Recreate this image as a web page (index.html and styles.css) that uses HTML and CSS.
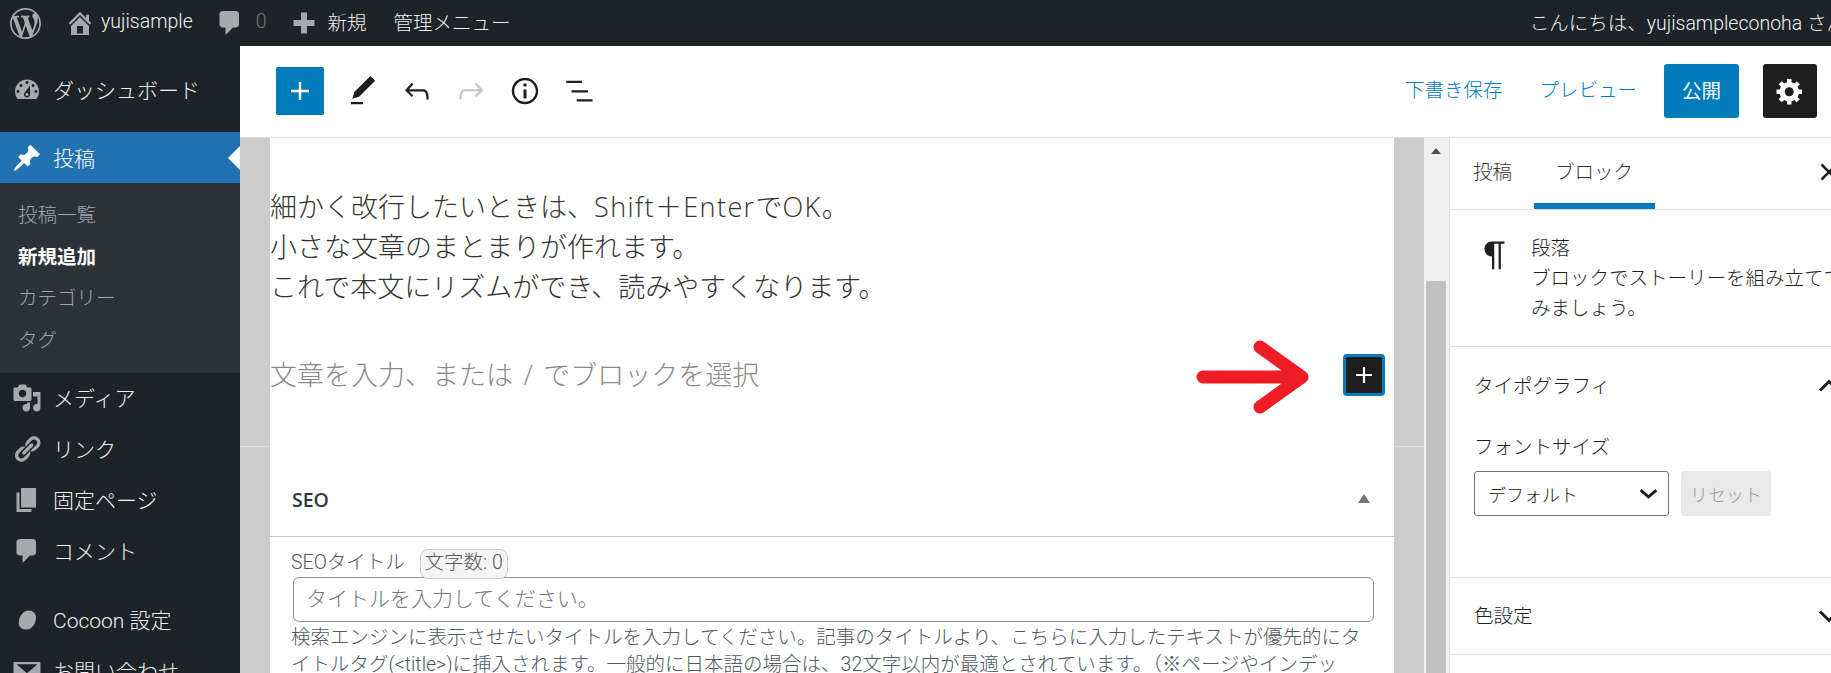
FILE: index.html
```html
<!DOCTYPE html>
<html lang="ja">
  <head>
    <meta charset="UTF-8" />
    <title>新規投稿を追加</title>
    <link rel="stylesheet" href="styles.css">
  </head>
  <body>
    <!-- 管理バー -->
    <header class="adminbar">
      <svg class="bar-icon bar-wp" viewBox="0 0 20 20"><path d="M20 10c0-5.51-4.49-10-10-10C4.48 0 0 4.49 0 10c0 5.52 4.48 10 10 10 5.51 0 10-4.48 10-10zM7.78 15.37L4.37 6.22c.55-.02 1.17-.08 1.17-.08.5-.06.44-1.13-.06-1.11 0 0-1.45.11-2.37.11-.18 0-.37 0-.58-.01C4.12 2.69 6.87 1.11 10 1.11c2.33 0 4.45.87 6.05 2.34-.68-.11-1.65.39-1.65 1.58 0 .74.45 1.36.9 2.1.35.61.55 1.36.55 2.46 0 1.49-1.4 5-1.4 5l-3.03-8.37c.54-.02.82-.17.82-.17.5-.05.44-1.25-.06-1.22 0 0-1.44.12-2.38.12-.87 0-2.33-.12-2.33-.12-.5-.03-.56 1.2-.06 1.22l.92.08 1.26 3.41zM17.41 10c.24-.64.74-1.87.43-4.25.7 1.29 1.05 2.71 1.05 4.25 0 3.29-1.73 6.24-4.4 7.78.97-2.59 1.94-5.2 2.92-7.78zM6.1 18.09C3.12 16.65 1.11 13.53 1.11 10c0-1.3.23-2.48.72-3.59C3.25 10.3 4.67 14.2 6.1 18.09zm4.03-6.63l2.58 6.98c-.86.29-1.76.45-2.71.45-.79 0-1.57-.11-2.29-.33.81-2.38 1.62-4.74 2.42-7.1z"/></svg>
      <svg class="bar-icon bar-home" viewBox="0 0 20 20"><path d="M16 8.5l1.53 1.53-1.06 1.06L10 4.62l-6.47 6.47-1.06-1.06L10 2.5l4 4v-2h2v4zm-6-2.46l6 5.99V18H4v-5.97zM12 17v-5H8v5h4z"/></svg>
      <span class="bar-site">yujisample</span>
      <svg class="bar-icon bar-comment" viewBox="0 0 20 20"><path d="M5 2h9c1.1 0 2 .9 2 2v7c0 1.1-.9 2-2 2h-2l-5 5v-5H5c-1.1 0-2-.9-2-2V4c0-1.1.9-2 2-2z"/></svg>
      <span class="bar-count">0</span>
      <svg class="bar-icon bar-plus" viewBox="0 0 20 20"><path d="M8 3h4v5h5v4h-5v5H8v-5H3V8h5z"/></svg>
      <span class="bar-new">新規</span>
      <span class="bar-manage">管理メニュー</span>
      <span class="bar-howdy">こんにちは、yujisampleconoha さん</span>
    </header>

    <div class="main">
      <!-- 左メニュー -->
      <nav class="sidemenu">
        <a class="menu-item menu-first">
          <svg viewBox="0 0 20 20"><path d="M3.76 16h12.48c1.1-1.37 1.76-3.11 1.76-5 0-4.42-3.58-8-8-8s-8 3.58-8 8c0 1.89.66 3.63 1.76 5zM10 4c.55 0 1 .45 1 1s-.45 1-1 1-1-.45-1-1 .45-1 1-1zM6 6c.55 0 1 .45 1 1s-.45 1-1 1-1-.45-1-1 .45-1 1-1zm8 0c.55 0 1 .45 1 1s-.45 1-1 1-1-.45-1-1 .45-1 1-1zm-5.37 5.55L12 7v6c0 1.1-.9 2-2 2s-2-.9-2-2c0-.57.24-1.08.63-1.45zM4 10c.55 0 1 .45 1 1s-.45 1-1 1-1-.45-1-1 .45-1 1-1zm12 0c.55 0 1 .45 1 1s-.45 1-1 1-1-.45-1-1 .45-1 1-1zm-5 3c0-.55-.45-1-1-1s-1 .45-1 1 .45 1 1 1 1-.45 1-1z"/></svg>
          ダッシュボード
        </a>
        <a class="menu-item menu-active">
          <svg viewBox="0 0 20 20"><path d="M10.44 3.02l1.82-1.82 6.36 6.35-1.83 1.82c-1.05-.68-2.48-.57-3.41.36l-.75.75c-.92.93-1.04 2.35-.35 3.41l-1.83 1.82-2.41-2.41-2.8 2.79c-.42.42-3.38 2.71-3.8 2.29s1.86-3.39 2.28-3.81l2.79-2.79L4.1 9.36l1.83-1.82c1.05.69 2.48.57 3.4-.36l.75-.75c.93-.92 1.05-2.35.36-3.41z"/></svg>
          投稿
        </a>
        <ul class="submenu">
          <li>投稿一覧</li>
          <li class="current">新規追加</li>
          <li>カテゴリー</li>
          <li>タグ</li>
        </ul>
        <a class="menu-item">
          <svg viewBox="0 0 20 20"><path d="M13 11V4c0-.55-.45-1-1-1h-1.67L9 1H5L3.67 3H2c-.55 0-1 .45-1 1v7c0 .55.45 1 1 1h10c.55 0 1-.45 1-1zM7 4.5c1.38 0 2.5 1.12 2.5 2.5S8.38 9.5 7 9.5 4.5 8.38 4.5 7 5.62 4.5 7 4.5zM14 6h5v10.5c0 1.38-1.12 2.5-2.5 2.5S14 17.88 14 16.5s1.12-2.5 2.5-2.5c.17 0 .34.02.5.05V9h-3V6zm-4 8.05V13h2v3.5c0 1.38-1.12 2.5-2.5 2.5S7 17.88 7 16.5 8.12 14 9.5 14c.17 0 .34.02.5.05z"/></svg>
          メディア
        </a>
        <a class="menu-item">
          <svg viewBox="0 0 20 20"><path d="M17.74 2.76c1.68 1.69 1.68 4.41 0 6.1l-1.53 1.52c-1.12 1.12-2.7 1.47-4.14 1.09l2.62-2.61.76-.77.76-.76c.84-.84.84-2.2 0-3.04-.84-.85-2.2-.85-3.04 0l-.77.76-3.38 3.38c-.37-1.44-.02-3 1.1-4.14l1.52-1.53c1.69-1.68 4.42-1.68 6.1 0zM8.59 13.43l5.34-5.34c.42-.42.42-1.1 0-1.52-.44-.43-1.13-.39-1.53 0l-5.33 5.34c-.42.42-.42 1.1 0 1.52.44.43 1.13.39 1.52 0zm-.76 2.29l4.14-4.15c.38 1.44.03 3.02-1.09 4.14l-1.52 1.53c-1.69 1.68-4.41 1.68-6.1 0-1.68-1.68-1.68-4.42 0-6.1l1.53-1.52c1.12-1.12 2.7-1.47 4.14-1.1l-4.14 4.15c-.85.84-.85 2.2 0 3.05.84.84 2.2.84 3.04 0z"/></svg>
          リンク
        </a>
        <a class="menu-item">
          <svg viewBox="0 0 20 20"><path d="M6 15V2h10v13H6zm-1 1h8v2H3V5h2v11z"/></svg>
          固定ページ
        </a>
        <a class="menu-item">
          <svg viewBox="0 0 20 20"><path d="M5 2h9c1.1 0 2 .9 2 2v7c0 1.1-.9 2-2 2h-2l-5 5v-5H5c-1.1 0-2-.9-2-2V4c0-1.1.9-2 2-2z"/></svg>
          コメント
        </a>
        <a class="menu-item menu-sep">
          <svg viewBox="0 0 20 20"><path d="M11 3.6c3 0 5 1.9 5 4.8 0 4-2.7 8-6.3 8C7 16.400 4.500 15 4.500 12 4.500 7.500 7.500 3.600 11 3.600z"/></svg>
          Cocoon 設定
        </a>
        <a class="menu-item">
          <svg viewBox="0 0 20 20"><path d="M1.500 4h17c.3 0 .5.2.5.5v11c0 .3-.2.5-.5.5h-17c-.3 0-.5-.2-.5-.5v-11c0-.3.2-.5.5-.5zM3 5.500l7 6 7-6z"/></svg>
          お問い合わせ
        </a>
      </nav>

      <div class="editor">
        <!-- ツールバー -->
        <div class="toolbar">
          <button class="add-btn">
            <svg viewBox="0 0 24 24"><path d="M18 11.200h-5.200V6h-1.600v5.200H6v1.600h5.200V18h1.600v-5.200H18z"/></svg>
          </button>
          <svg class="tool-icon" viewBox="0 0 24 24"><path d="M20.100 5.100L16.900 2 6.200 12.700l-1.300 4.400 4.500-1.300L20.100 5.100zM4 20.800h8v-1.500H4v1.500z"/></svg>
          <svg class="tool-icon" viewBox="0 0 24 24"><path d="M18.300 11.700c-.6-.6-1.400-.9-2.300-.9H6.700l2.900-3.300-1.100-1-4.500 5L8.500 16l1-1-2.700-2.700H16c.5 0 .9.2 1.300.5 1 1 1 3.400 1 4.500v.3h1.500v-.2c0-1.500 0-4.300-1.500-5.700z"/></svg>
          <svg class="tool-icon tool-off" viewBox="0 0 24 24"><path d="M15.600 6.500l-1.100 1 2.900 3.300H8c-.9 0-1.700.3-2.300.9-1.400 1.500-1.400 4.200-1.400 5.600v.2h1.500v-.3c0-1.100 0-3.500 1-4.500.3-.3.7-.5 1.300-.5h9.200L14.500 15l1.100 1.100 4.600-4.600-4.600-5z"/></svg>
          <svg class="tool-icon" viewBox="0 0 24 24"><path d="M12 3.200c-4.800 0-8.800 3.900-8.800 8.800 0 4.800 3.900 8.800 8.800 8.800 4.800 0 8.800-3.900 8.800-8.800 0-4.800-4-8.800-8.800-8.800zm0 16c-4 0-7.200-3.300-7.200-7.200C4.800 8 8 4.800 12 4.800s7.200 3.300 7.200 7.200c0 4-3.200 7.200-7.200 7.200zM11 17h2v-6h-2v6zm0-8h2V7h-2v2z"/></svg>
          <svg class="tool-icon" viewBox="0 0 24 24"><path d="M3.500 5.200H14v1.500H3.500zM7 11.500h11V13H7zM10.500 17.500H21V19H10.500z"/></svg>
          <div class="toolbar-right">
            <a class="tool-link">下書き保存</a>
            <a class="tool-link tool-link-last">プレビュー</a>
            <button class="publish-btn">公開</button>
            <button class="settings-btn">
              <svg viewBox="0 0 20 20"><path d="M18 12h-2.180c-.17.7-.44 1.350-.81 1.930l1.540 1.540-2.100 2.100-1.540-1.540c-.58.36-1.230.63-1.910.79V19H8v-2.180c-.68-.16-1.330-.43-1.910-.79l-1.540 1.540-2.120-2.120 1.540-1.540c-.36-.58-.63-1.230-.79-1.910H1V9.030h2.170c.16-.7.44-1.350.8-1.940L2.430 5.550l2.100-2.100 1.540 1.540c.58-.37 1.240-.64 1.930-.81V2h3v2.180c.68.16 1.330.43 1.910.79l1.540-1.540 2.120 2.120-1.540 1.540c.36.59.64 1.240.8 1.940H18V12zm-8.500 1.500c1.660 0 3-1.340 3-3s-1.340-3-3-3-3 1.340-3 3 1.340 3 3 3z"/></svg>
            </button>
          </div>
        </div>

        <div class="workspace">
          <!-- 本文エリア -->
          <div class="canvas">
            <div class="gutter"></div>
            <div class="content">
              <div class="blocks">
                <p class="para">細かく改行したいときは、<span class="latin">Shift＋Enter</span>で<span class="latin">OK</span>。<br>小さな文章のまとまりが作れます。<br>これで本文にリズムができ、読みやすくなります。</p>
                <div class="new-block">
                  <span class="placeholder">文章を入力、または / でブロックを選択</span>
                  <svg class="red-arrow" viewBox="0 0 130 76"><path d="M19 38H112M76 8L118 38L76 68" fill="none" stroke="#ee1c25" stroke-width="13" stroke-linecap="round" stroke-linejoin="round"/></svg>
                  <button class="inline-add">
                    <svg viewBox="0 0 24 24"><path d="M18 11.200h-5.200V6h-1.600v5.200H6v1.600h5.200V18h1.600v-5.200H18z"/></svg>
                  </button>
                </div>
              </div>
              <div class="seo-head">
                <span>SEO</span>
                <i class="seo-toggle"></i>
              </div>
              <div class="seo-body">
                <div class="seo-label">SEOタイトル <span class="count-badge">文字数: 0</span></div>
                <div class="seo-input">タイトルを入力してください。</div>
                <p class="seo-note">検索エンジンに表示させたいタイトルを入力してください。記事のタイトルより、こちらに入力したテキストが優先的にタ<br>イトルタグ(&lt;title&gt;)に挿入されます。一般的に日本語の場合は、32文字以内が最適とされています。（※ページやインデッ</p>
              </div>
            </div>
            <div class="gutter"></div>
            <div class="scrollbar">
              <i class="scroll-up"></i>
              <div class="scroll-thumb"></div>
            </div>
          </div>

          <!-- 右サイドバー -->
          <aside class="panel">
            <div class="tabs">
              <span class="tab">投稿</span>
              <span class="tab tab-on">ブロック</span>
              <svg class="tab-close" viewBox="0 0 24 24"><path d="M6 6l12 12M18 6L6 18" fill="none" stroke="#1e1e1e" stroke-width="2"/></svg>
            </div>
            <div class="block-card">
              <svg class="para-icon" viewBox="0 0 24 24"><path d="M18.300 3H9.900C7 3 5 5.200 5 8s2 5 4.900 5H10v8.500h1.500V4.500h2.900v17h1.500v-17h2.400z"/></svg>
              <div>
                <div class="card-title">段落</div>
                <div class="card-text">ブロックでストーリーを組み立ててみましょう。</div>
              </div>
            </div>
            <div class="section section-type">
              <div class="section-head">
                <span>タイポグラフィ</span>
                <svg class="chev" viewBox="0 0 24 24"><path d="M6 15l6-6 6 6" fill="none" stroke="#1e1e1e" stroke-width="2"/></svg>
              </div>
              <div class="font-label">フォントサイズ</div>
              <div class="font-row">
                <div class="font-select">
                  デフォルト
                  <svg viewBox="0 0 24 24"><path d="M5 9l7 6 7-6" fill="none" stroke="#1e1e1e" stroke-width="2.500"/></svg>
                </div>
                <button class="reset-btn">リセット</button>
              </div>
            </div>
            <div class="section">
              <div class="section-head section-color">
                <span>色設定</span>
                <svg class="chev" viewBox="0 0 24 24"><path d="M6 9l6 6 6-6" fill="none" stroke="#1e1e1e" stroke-width="2"/></svg>
              </div>
            </div>
          </aside>
        </div>
      </div>
    </div>
  </body>
</html>
```

FILE: styles.css
```css
/* 基本 */
* {
  margin: 0;
  padding: 0;
  box-sizing: border-box;
}

html,
body {
  width: 1831px;
  height: 673px;
  overflow: hidden;
}

body {
  display: flex;
  flex-direction: column;
  background-color: #fff;
  color: #1e1e1e;
  font-family: Roboto, "Noto Sans CJK JP", sans-serif;
}

button {
  border: none;
  font-family: inherit;
}

svg {
  display: block;
  fill: currentColor;
  flex-shrink: 0;
}

/* 管理バー */
.adminbar {
  display: flex;
  align-items: center;
  flex-shrink: 0;
  height: 46px;
  padding-left: 10px;
  background-color: #1d2327;
  color: #f0f0f1;
  font-size: 19.5px;
  font-weight: 300;
  white-space: nowrap;
}

.adminbar span {
  margin-bottom: 3px;
}

.bar-icon {
  color: #a7aaad;
}

.bar-wp {
  width: 31px;
  height: 31px;
}

.bar-home {
  width: 30px;
  height: 30px;
  margin-left: 24px;
}

.bar-site {
  margin-left: 6px;
}

.bar-comment {
  width: 30px;
  height: 30px;
  margin-left: 22px;
}

.bar-count {
  margin-left: 11px;
  color: #72777c;
}

.bar-plus {
  width: 30px;
  height: 30px;
  margin-left: 22px;
}

.bar-new {
  margin-left: 9px;
}

.bar-manage {
  margin-left: 27px;
}

.bar-howdy {
  flex-shrink: 0;
  margin-left: auto;
  margin-right: -15px;
}

/* 本体 */
.main {
  display: flex;
  flex: 1;
  min-height: 0;
}

/* 左メニュー */
.sidemenu {
  flex-shrink: 0;
  width: 240px;
  padding-top: 18px;
  overflow: hidden;
  background-color: #1d2327;
  color: #f0f0f1;
  font-weight: 300;
}

.menu-item {
  display: flex;
  align-items: center;
  gap: 11px;
  height: 51px;
  padding: 0 0 2px 12px;
  font-size: 21px;
  white-space: nowrap;
}

.menu-item svg {
  width: 30px;
  height: 30px;
  margin-top: 2px;
  color: #a7aaad;
}

.menu-first {
  margin-bottom: 17px;
}

.menu-active {
  position: relative;
  background-color: #2271b1;
  color: #fff;
}

.menu-active svg {
  color: #fff;
}

.menu-active::after {
  content: "";
  position: absolute;
  top: 14px;
  right: 0;
  border: 12px solid transparent;
  border-left-width: 0;
  border-right-color: #fff;
}

.menu-sep {
  margin-top: 18px;
}

.submenu {
  padding: 12px 0 11px 18px;
  background-color: #2c3338;
  color: #a0a5aa;
  font-size: 19.5px;
  list-style: none;
}

.submenu li {
  height: 41.7px;
  line-height: 41.7px;
}

.submenu .current {
  color: #fff;
  font-weight: 700;
}

/* エディター */
.editor {
  display: flex;
  flex: 1;
  flex-direction: column;
  min-width: 0;
}

.toolbar {
  display: flex;
  align-items: center;
  flex-shrink: 0;
  gap: 18px;
  height: 92px;
  padding: 0 14px 1px 36px;
  border-bottom: 1px solid #e0e0e0;
}

.add-btn {
  display: flex;
  align-items: center;
  justify-content: center;
  width: 48px;
  height: 48px;
  margin-right: 3px;
  border-radius: 2px;
  background-color: #007cba;
  color: #fff;
}

.add-btn svg {
  width: 36px;
  height: 36px;
}

.tool-icon {
  width: 36px;
  height: 36px;
}

.tool-off {
  color: #c4c4c4;
}

.toolbar-right {
  display: flex;
  align-items: center;
  margin-left: auto;
}

.tool-link {
  margin-right: 37px;
  padding-bottom: 5px;
  color: #007cba;
  font-size: 19.5px;
  font-weight: 300;
}

.tool-link-last {
  margin-right: 27px;
}

.publish-btn {
  width: 75px;
  height: 54px;
  padding-bottom: 4px;
  border-radius: 3px;
  background-color: #007cba;
  color: #fff;
  font-size: 19.5px;
}

.settings-btn {
  display: flex;
  align-items: center;
  justify-content: center;
  width: 54px;
  height: 54px;
  margin-left: 24px;
  border-radius: 3px;
  background-color: #1e1e1e;
  color: #fff;
}

.settings-btn svg {
  width: 30px;
  height: 30px;
}

.workspace {
  display: flex;
  flex: 1;
  min-height: 0;
}

/* 本文エリア */
.canvas {
  display: flex;
  flex-shrink: 0;
  width: 1210px;
}

.gutter {
  position: relative;
  flex-shrink: 0;
  width: 30px;
  background-color: #ccc;
}

.gutter::after {
  content: "";
  position: absolute;
  top: 308px;
  left: 0;
  right: 0;
  height: 1px;
  background-color: #dedede;
}

.content {
  flex: 1;
  min-width: 0;
  overflow: hidden;
}

.blocks {
  height: 308px;
  padding-top: 49px;
}

.para {
  color: #333;
  font-family: "Open Sans", "Noto Sans CJK JP", sans-serif;
  font-size: 27px;
  font-weight: 300;
  line-height: 40px;
  white-space: nowrap;
}

.latin {
  letter-spacing: 1.4px;
}

.new-block {
  display: flex;
  align-items: center;
  height: 42px;
  margin-top: 47px;
}

.placeholder {
  padding-bottom: 3px;
  color: #8a8a8a;
  font-family: "Open Sans", "Noto Sans CJK JP", sans-serif;
  font-size: 27px;
  font-weight: 300;
  word-spacing: 3.5px;
  white-space: nowrap;
}

.red-arrow {
  width: 130px;
  height: 76px;
  margin-top: 4px;
  margin-left: auto;
}

.inline-add {
  display: flex;
  align-items: center;
  justify-content: center;
  width: 42px;
  height: 42px;
  margin: 0 9px 0 29px;
  border: 3px solid #007cba;
  border-radius: 4px;
  background-color: #1e1e1e;
  color: #fff;
}

.inline-add svg {
  width: 32px;
  height: 32px;
}

.seo-head {
  display: flex;
  align-items: center;
  justify-content: space-between;
  height: 91px;
  padding: 17px 22px 0;
  border-bottom: 1px solid #c3c4c7;
  color: #32373c;
  font-family: "Open Sans", "Noto Sans CJK JP", sans-serif;
  font-size: 19.5px;
  font-weight: 600;
}

.seo-toggle {
  width: 0;
  height: 0;
  margin: 0 2px 3px 0;
  border: 6.500px solid transparent;
  border-top-width: 0;
  border-bottom: 9px solid #72777c;
}

.seo-body {
  padding: 11px 20px 0 21px;
  color: #50575e;
  font-size: 19.5px;
  font-weight: 300;
}

.seo-label {
  height: 29px;
  line-height: 29px;
  white-space: nowrap;
}

.count-badge {
  display: inline-block;
  height: 30px;
  margin-left: 10px;
  padding: 0 4px;
  border: 1px solid #ccc;
  border-radius: 8px;
  background-color: #f5f5f5;
  line-height: 26px;
}

.seo-input {
  height: 45px;
  margin-left: 2px;
  padding-left: 12px;
  border: 1px solid #8c8f94;
  border-radius: 6px;
  color: #72777c;
  font-size: 21px;
  line-height: 42px;
}

.seo-note {
  padding-top: 2px;
  line-height: 27px;
  white-space: nowrap;
}

.scrollbar {
  position: relative;
  flex-shrink: 0;
  width: 26px;
  padding: 0 3px 0 2px;
  border-right: 1px solid #e0e0e0;
  background-color: #f0f0f0;
}

.scroll-up {
  display: block;
  width: 0;
  height: 0;
  margin: 10px auto 0;
  border: 5.500px solid transparent;
  border-top-width: 0;
  border-bottom: 6px solid #505050;
}

.scroll-thumb {
  height: 393px;
  margin-top: 127px;
  background-color: #c1c1c1;
}

/* 右サイドバー */
.panel {
  flex-shrink: 0;
  width: 420px;
  color: #1e1e1e;
  font-size: 19.5px;
  font-weight: 300;
}

.tabs {
  display: flex;
  position: relative;
  height: 72px;
  padding-left: 23px;
  border-bottom: 1px solid #e0e0e0;
}

.tab {
  position: relative;
  display: flex;
  align-items: center;
  margin-right: 43px;
  padding-bottom: 7px;
  color: #333;
}

.tab-on::after {
  content: "";
  position: absolute;
  left: -21px;
  right: -22px;
  bottom: 0;
  height: 6px;
  background-color: #007cba;
}

.tab-close {
  position: absolute;
  top: 19px;
  left: 364px;
  width: 30px;
  height: 30px;
}

.block-card {
  display: flex;
  gap: 18px;
  height: 137px;
  padding: 23px 0 0 27px;
  border-bottom: 1px solid #e0e0e0;
}

.para-icon {
  width: 36px;
  height: 36px;
  margin-top: 4px;
}

.card-title {
  font-size: 19.5px;
  line-height: 31px;
}

.card-text {
  width: 314px;
  font-size: 19.5px;
  line-height: 30px;
}

.section {
  border-bottom: 1px solid #e0e0e0;
}

.section-type {
  height: 231px;
  padding: 0 24px;
}

.section-head {
  display: flex;
  align-items: center;
  justify-content: space-between;
  height: 78px;
}

.section-head span {
  padding-bottom: 4px;
}

.section-head .chev {
  width: 36px;
  height: 36px;
  margin-right: -1px;
}

.section-color {
  height: 76px;
  padding: 0 24px;
}

.font-label {
  margin-top: 8px;
  line-height: 30px;
}

.font-row {
  display: flex;
  gap: 12px;
  margin-top: 8px;
}

.font-select {
  display: flex;
  align-items: center;
  justify-content: space-between;
  width: 195px;
  height: 45px;
  padding: 0 6px 0 13px;
  border: 1px solid #757575;
  border-radius: 3px;
  font-size: 18px;
}

.font-select svg {
  width: 27px;
  height: 27px;
}

.reset-btn {
  width: 90px;
  height: 45px;
  border-radius: 3px;
  background-color: #e9e9e9;
  color: #9a9a9a;
  font-size: 18px;
  font-weight: 300;
}
```
